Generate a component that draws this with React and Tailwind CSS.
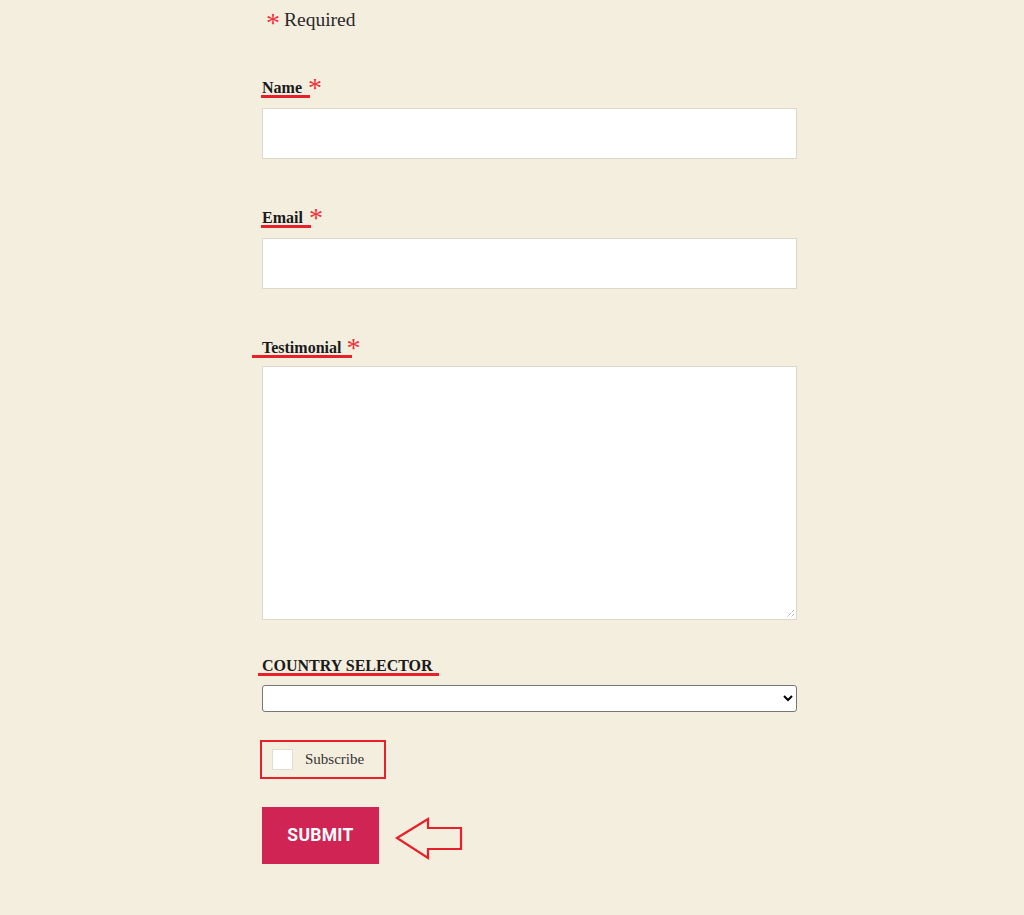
import React from 'react';

const serif = { fontFamily: '"Liberation Serif", "Times New Roman", serif' };

const FieldLabel = ({ text, required = true, extraLeft = false }) => (
    <div className="flex items-end h-[20px]">
        <span
            className={`inline-block border-b-[3px] border-[#e8202a] font-bold text-[16px] text-[#1a1a1a] leading-[14px] ${
                extraLeft ? '-ml-[10px] pl-[10px] pr-[11px]' : '-ml-[1px] pl-[1px] pr-[8px]'
            }`}
        >
            {text}
        </span>
        {required && (
            <span
                className={`self-start text-[#f0303a] text-[28px] leading-[18px] mt-[1px] ${
                    extraLeft ? '-ml-[6px]' : '-ml-[2px]'
                }`}
            >
                *
            </span>
        )}
    </div>
);

export default function App() {
    return (
        <div className="min-h-[915px] bg-[#f4eedf] pt-[8px]" style={serif}>
            <div className="ml-[262px] w-[535px]">
                <div className="flex items-center h-[24px] pl-[4px] text-[19.5px] text-[#2a2a2a]">
                    <span className="text-[#f0303a] text-[28px] mr-[4px] leading-none mt-[6px]">*</span>
                    <span>Required</span>
                </div>

                <div className="mt-[46px]">
                    <FieldLabel text="Name" />
                    <div className="mt-[10px] h-[51px] bg-white border border-[#dcd8cc]"></div>
                </div>

                <div className="mt-[49px]">
                    <FieldLabel text="Email" />
                    <div className="mt-[10px] h-[51px] bg-white border border-[#dcd8cc]"></div>
                </div>

                <div className="mt-[49px]">
                    <FieldLabel text="Testimonial" extraLeft />
                    <div className="relative mt-[8px] h-[254px] bg-white border border-[#dcd8cc]">
                        <svg className="absolute right-[1px] bottom-[1px]" width="10" height="10" viewBox="0 0 10 10">
                            <path d="M9 2 L2 9 M9 6 L6 9" stroke="#888" strokeWidth="1" strokeDasharray="1 1" />
                        </svg>
                    </div>
                </div>

                <div className="mt-[36px]">
                    <div className="flex items-end h-[20px]">
                        <span className="inline-block -ml-[4px] pl-[4px] pr-[6px] border-b-[3px] border-[#e8202a] font-bold text-[16px] leading-[14px] text-[#1a1a1a]">
                            COUNTRY SELECTOR
                        </span>
                    </div>
                    <select className="mt-[9px] w-full h-[27px] bg-white border border-[#767676] rounded-[3px] text-[13px]">
                        <option></option>
                    </select>
                </div>

                <div className="mt-[28px] -ml-[2px] w-[126px] h-[39px] border-2 border-[#e8202a] flex items-center pl-[10px]">
                    <div className="w-[21px] h-[21px] bg-white border border-[#e2ddd0]"></div>
                    <span className="ml-[12px] text-[15px] text-[#333]">Subscribe</span>
                </div>

                <div className="mt-[28px] flex items-center">
                    <button
                        className="w-[117px] h-[57px] bg-[#cf2454] text-white font-bold text-[17.5px] tracking-[0.3px]"
                        style={{ fontFamily: 'Roboto, "Open Sans", sans-serif' }}
                    >
                        SUBMIT
                    </button>
                    <svg className="ml-[15px] mt-[6px]" width="72" height="44" viewBox="0 0 72 44">
                        <polygon
                            points="3,21 34,2 34,11 67,11 67,32 34,32 34,41"
                            fill="none"
                            stroke="#e8202a"
                            strokeWidth="2.2"
                            strokeLinejoin="miter"
                        />
                    </svg>
                </div>
            </div>
        </div>
    );
}
